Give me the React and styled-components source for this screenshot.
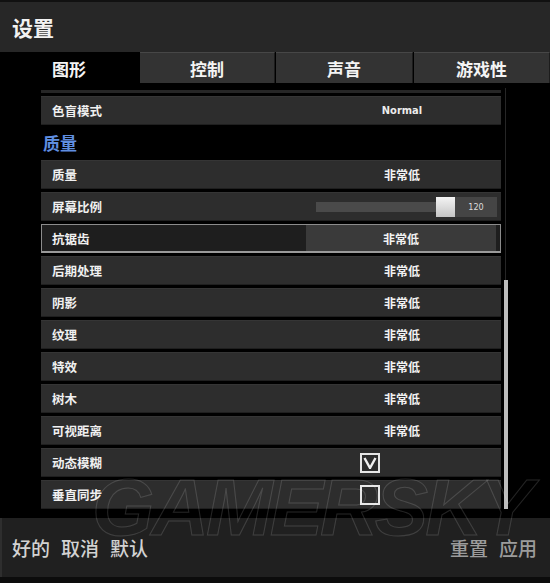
import React from 'react'
import styled, { createGlobalStyle } from 'styled-components'

const GlobalStyle = createGlobalStyle`
  html, body {
    margin: 0;
    padding: 0;
    background: #000;
  }
  body {
    font-family: "Noto Sans CJK SC", "Noto Sans", sans-serif;
    overflow: hidden;
  }
`

const Screen = styled.div`
  position: relative;
  width: 550px;
  height: 583px;
  display: flex;
  flex-direction: column;
  background: #000;
  overflow: hidden;
`

const Header = styled.div`
  height: 50px;
  border-top: 2px solid #111;
  background: #272727;
  display: flex;
  align-items: center;
  padding-left: 12px;
  color: #f2f2f2;
  font-size: 21px;
  font-weight: 700;
`

const TabBar = styled.div`
  height: 31px;
  display: grid;
  grid-template-columns: 139px 135px 137px 136px;
  column-gap: 1px;
  background: #000;
`

const Tab = styled.div`
  display: flex;
  align-items: center;
  justify-content: center;
  font-size: 17px;
  font-weight: 700;
  color: #f4f4f4;
  background: ${p => (p.$active ? '#000' : '#333')};
  border-top: 1px solid ${p => (p.$active ? '#000' : '#474747')};
  border-right: 1px solid ${p => (p.$active ? '#000' : '#1c1c1c')};
`

const Content = styled.div`
  height: 435px;
  display: flex;
  padding-left: 41px;
  background: #000;
`

const List = styled.div`
  width: 460px;
  display: flex;
  flex-direction: column;
  gap: 3px;
  padding-top: 7px;
`

const CutRow = styled.div`
  height: 3px;
  background: #262626;
`

const Row = styled.div`
  height: 29px;
  box-sizing: border-box;
  display: flex;
  align-items: center;
  background: ${p => (p.$focus ? '#1e1e1e' : '#2d2d2d')};
  border: ${p => (p.$focus ? '1px solid #8c8c8c' : 'none')};
  border-top: ${p => (p.$focus ? '1px solid #8c8c8c' : '1px solid #353535')};
  border-bottom: ${p => (p.$focus ? '2px solid #9a9a9a' : '1px solid #1f1f1f')};
  padding-right: 4px;
`

const Label = styled.div`
  width: ${p => (p.$focus ? 254 : 255)}px;
  padding-left: ${p => (p.$focus ? 10 : 11)}px;
  color: #f0f0f0;
  font-size: 12.5px;
  font-weight: 700;
  flex-shrink: 0;
`

const Value = styled.div`
  flex: 1;
  height: 100%;
  display: flex;
  align-items: center;
  justify-content: center;
  color: #f2f2f2;
  font-size: 12px;
  font-weight: 700;
  background: ${p => (p.$focus ? '#3a3a3a' : 'transparent')};
  box-sizing: border-box;
`

const Latin = styled.span`
  font-family: "DejaVu Sans Condensed", "DejaVu Sans", sans-serif;
  font-size: 11px;
  font-weight: 700;
  color: #ececec;
`

const Section = styled.div`
  height: 29px;
  display: flex;
  align-items: center;
  padding-left: 2px;
  color: #5f8ee0;
  font-size: 17px;
  font-weight: 700;
`

const Slider = styled.div`
  flex: 1;
  display: flex;
  align-items: center;
  padding-left: 9px;
`

const Track = styled.div`
  flex: 1;
  height: 10px;
  background: #4a4a4a;
`

const Thumb = styled.div`
  width: 19px;
  height: 20px;
  background: linear-gradient(#f4f4f4, #c4c4c4);
`

const Readout = styled.div`
  width: 42px;
  height: 20px;
  display: flex;
  align-items: center;
  justify-content: center;
  background: #454545;
  font-family: "DejaVu Sans Condensed", "DejaVu Sans", sans-serif;
  font-size: 9px;
  color: #dcdcdc;
`

const CheckCell = styled.div`
  flex: 1;
  display: flex;
  align-items: center;
  padding-left: 53px;
`

const Checkbox = styled.div`
  width: 20px;
  height: 20px;
  box-sizing: border-box;
  border: 2px solid #e6e6e6;
  display: flex;
  align-items: center;
  justify-content: center;
`

const ScrollTrack = styled.div`
  width: 4px;
  margin-left: 3px;
  margin-top: 5px;
  height: 421px;
  display: flex;
  flex-direction: column;
  justify-content: flex-end;
  background: linear-gradient(90deg, transparent 1px, #262626 1px, #262626 2px, transparent 2px);
`

const ScrollThumb = styled.div`
  height: 229px;
  background: #bdbdbd;
`

const Footer = styled.div`
  height: 59px;
  display: flex;
  align-items: center;
  justify-content: space-between;
  padding: 0 13px 0 10px;
  background: #202020;
  border-left: 2px solid #2e2e2e;
`

const ButtonGroup = styled.div`
  display: flex;
  gap: 11px;
`

const FooterButton = styled.div`
  font-size: 19px;
  font-weight: 500;
  color: ${p => (p.$dim ? '#9c9c9c' : '#d2d2d2')};
`

const BottomEdge = styled.div`
  flex: 1;
  background: #0c0c0c;
`

const Watermark = styled.div`
  position: absolute;
  left: 92px;
  top: 462px;
  font-family: "Liberation Sans", sans-serif;
  font-style: italic;
  font-weight: 700;
  font-size: 80px;
  letter-spacing: -3px;
  color: transparent;
  -webkit-text-stroke: 1px rgba(255, 255, 255, 0.14);
  pointer-events: none;
`

const rows = [
  { label: '后期处理', value: '非常低' },
  { label: '阴影', value: '非常低' },
  { label: '纹理', value: '非常低' },
  { label: '特效', value: '非常低' },
  { label: '树木', value: '非常低' },
  { label: '可视距离', value: '非常低' },
]

function Tick() {
  return (
    <svg width="14" height="12" viewBox="0 0 14 12">
      <polyline points="1.5,1 7,11 12.5,1" fill="none" stroke="#f0f0f0" strokeWidth="2.4" />
    </svg>
  )
}

export default function App() {
  return (
    <Screen>
      <GlobalStyle />
      <Header>设置</Header>
      <TabBar>
        <Tab $active>图形</Tab>
        <Tab>控制</Tab>
        <Tab>声音</Tab>
        <Tab>游戏性</Tab>
      </TabBar>
      <Content>
        <List>
          <CutRow />
          <Row>
            <Label>色盲模式</Label>
            <Value><Latin>Normal</Latin></Value>
          </Row>
          <Section>质量</Section>
          <Row>
            <Label>质量</Label>
            <Value>非常低</Value>
          </Row>
          <Row>
            <Label>屏幕比例</Label>
            <Slider>
              <Track />
              <Thumb />
              <Readout>120</Readout>
            </Slider>
          </Row>
          <Row $focus>
            <Label $focus>抗锯齿</Label>
            <Value $focus>非常低</Value>
          </Row>
          {rows.map(r => (
            <Row key={r.label}>
              <Label>{r.label}</Label>
              <Value>{r.value}</Value>
            </Row>
          ))}
          <Row>
            <Label>动态模糊</Label>
            <CheckCell>
              <Checkbox><Tick /></Checkbox>
            </CheckCell>
          </Row>
          <Row>
            <Label>垂直同步</Label>
            <CheckCell>
              <Checkbox />
            </CheckCell>
          </Row>
        </List>
        <ScrollTrack>
          <ScrollThumb />
        </ScrollTrack>
      </Content>
      <Footer>
        <ButtonGroup>
          <FooterButton>好的</FooterButton>
          <FooterButton>取消</FooterButton>
          <FooterButton>默认</FooterButton>
        </ButtonGroup>
        <ButtonGroup>
          <FooterButton $dim>重置</FooterButton>
          <FooterButton $dim>应用</FooterButton>
        </ButtonGroup>
      </Footer>
      <BottomEdge />
      <Watermark>GAMERSKY</Watermark>
    </Screen>
  )
}
